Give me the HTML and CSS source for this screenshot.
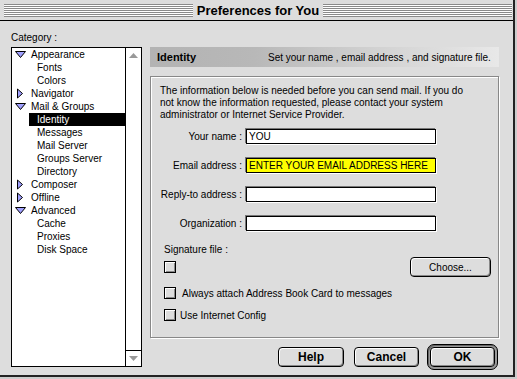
FILE: index.html
```html
<!DOCTYPE html>
<html lang="en">
<head>
<meta charset="UTF-8" />
<title>Preferences for You</title>
<link rel="stylesheet" href="styles.css">
</head>
<body>

<div class="window">
  <div class="titlebar">
    <span class="stripes"></span>
    <span class="title">Preferences for You</span>
    <span class="stripes"></span>
  </div>

  <div class="content">
    <div class="sidebar">
      <div class="cat-label">Category :</div>
      <div class="listbox">
        <ul class="tree">
          <li class="node"><svg class="twisty" width="11" height="7" viewBox="0 0 11 7"><path d="M0.5 0.5h10l-5 6z" fill="#a0a0ff" stroke="#000"/></svg>Appearance</li>
          <li class="leaf">Fonts</li>
          <li class="leaf">Colors</li>
          <li class="node"><svg class="twisty" width="11" height="11" viewBox="0 0 11 11"><path d="M2.5 1v9l5-4.5z" fill="#a0a0ff" stroke="#000"/></svg>Navigator</li>
          <li class="node"><svg class="twisty" width="11" height="7" viewBox="0 0 11 7"><path d="M0.5 0.5h10l-5 6z" fill="#a0a0ff" stroke="#000"/></svg>Mail &amp; Groups</li>
          <li class="leaf selected">Identity</li>
          <li class="leaf">Messages</li>
          <li class="leaf">Mail Server</li>
          <li class="leaf">Groups Server</li>
          <li class="leaf">Directory</li>
          <li class="node"><svg class="twisty" width="11" height="11" viewBox="0 0 11 11"><path d="M2.5 1v9l5-4.5z" fill="#a0a0ff" stroke="#000"/></svg>Composer</li>
          <li class="node"><svg class="twisty" width="11" height="11" viewBox="0 0 11 11"><path d="M2.5 1v9l5-4.5z" fill="#a0a0ff" stroke="#000"/></svg>Offline</li>
          <li class="node"><svg class="twisty" width="11" height="7" viewBox="0 0 11 7"><path d="M0.5 0.5h10l-5 6z" fill="#a0a0ff" stroke="#000"/></svg>Advanced</li>
          <li class="leaf">Cache</li>
          <li class="leaf">Proxies</li>
          <li class="leaf">Disk Space</li>
        </ul>
        <div class="scrollbar">
          <div class="arrow"><svg width="9" height="5" viewBox="0 0 9 5"><path d="M4.5 0L9 5H0z" fill="#999"/></svg></div>
          <div class="track"></div>
          <div class="arrow down"><svg width="9" height="5" viewBox="0 0 9 5"><path d="M0 0h9L4.5 5z" fill="#999"/></svg></div>
        </div>
      </div>
    </div>

    <div class="main">
      <div class="header">
        <span class="hdr-title">Identity</span>
        <span class="hdr-desc">Set your name , email address , and signature file.</span>
      </div>

      <div class="panel">
        <p class="intro">The information below is needed before you can send mail. If you do not know the information requested, please contact your system administrator or Internet Service Provider.</p>

        <div class="fields">
          <label>Your name :</label>
          <div class="field">YOU</div>
          <label>Email address :</label>
          <div class="field yellow">ENTER YOUR EMAIL ADDRESS HERE</div>
          <label>Reply-to address :</label>
          <div class="field"></div>
          <label>Organization :</label>
          <div class="field"></div>
        </div>

        <div class="sig">
          <div class="sig-label">Signature file :</div>
          <div class="sig-row">
            <span class="checkbox"></span>
            <button class="btn choose">Choose...</button>
          </div>
          <div class="check-row wide"><span class="checkbox"></span>Always attach Address Book Card to messages</div>
          <div class="check-row"><span class="checkbox"></span>Use Internet Config</div>
        </div>
      </div>

      <div class="buttons">
        <button class="btn bold help">Help</button>
        <button class="btn bold cancel">Cancel</button>
        <div class="default-ring"><button class="btn bold ok">OK</button></div>
      </div>
    </div>
  </div>
</div>

</body>
</html>
```

FILE: styles.css
```css
body {
  margin: 0;
  background: #cccccc;
  font-family: 'Liberation Sans', Arial, sans-serif;
  font-size: 10px;
  color: #000;
}

.window {
  width: 513px;
  height: 375px;
  background: #dddddd;
  border-right: 2px solid #222;
  border-bottom: 2px solid #222;
}

.titlebar {
  height: 20px;
  border-bottom: 1px solid #000;
  display: flex;
  align-items: center;
  padding: 0 1px 0 4px;
}

.stripes {
  flex: 1;
  height: 13px;
  background: repeating-linear-gradient(to bottom, #8a8a8a 0, #8a8a8a 1px, #ffffff 1px, #ffffff 2px);
}

.title {
  font-size: 13px;
  font-weight: bold;
  padding: 0 4px;
}

.content {
  display: flex;
  padding: 10px 0 0 11px;
}

.sidebar {
  width: 131px;
}

.cat-label {
  height: 13px;
  line-height: 13px;
  margin-bottom: 3px;
}

.listbox {
  height: 318px;
  background: #fff;
  border: 1px solid #000;
  display: flex;
}

.tree {
  flex: 1;
  list-style: none;
  margin: 0;
  padding: 0;
}

.tree li {
  height: 13px;
  line-height: 13px;
  white-space: nowrap;
}

.node {
  display: flex;
  align-items: center;
  padding-left: 3px;
}

.twisty {
  margin-right: 5px;
  flex: none;
}

.leaf {
  margin-left: 17px;
  padding-left: 8px;
}

.selected {
  background: #000;
  color: #fff;
}

.scrollbar {
  width: 15px;
  border-left: 1px solid #000;
  display: flex;
  flex-direction: column;
}

.arrow {
  height: 15px;
  display: flex;
  align-items: center;
  justify-content: center;
}

.arrow.down {
  border-top: 1px solid #000;
}

.track {
  flex: 1;
}

.main {
  width: 349px;
  margin: 16px 0 0 8px;
}

.header {
  height: 20px;
  display: flex;
  align-items: center;
  padding-left: 7px;
  background: linear-gradient(to right, #b3b3b3 0%, #b8b8b8 30%, #d2d2d2 65%, #e8e8e8 100%);
}

.hdr-title {
  width: 111px;
  font-size: 11px;
  font-weight: bold;
}

.panel {
  height: 262px;
  box-sizing: border-box;
  margin-top: 9px;
  border: 1px solid #888;
  box-shadow: inset 1px 1px 0 #fff, 1px 1px 0 #fff;
  padding: 8px 7px 0 9px;
}

.intro {
  margin: 0;
  line-height: 12px;
  width: 310px;
}

.fields {
  display: grid;
  grid-template-columns: 82px 190px;
  column-gap: 4px;
  row-gap: 14px;
  margin-top: 8px;
  align-items: center;
}

.fields label {
  text-align: right;
}

.field {
  height: 13px;
  line-height: 13px;
  border: 1px solid #000;
  background: #fff;
  padding-left: 2px;
  box-shadow: -1px -1px 0 #777, 1px 1px 0 #fff;
}

.field.yellow {
  background: #ffff00;
}

.sig {
  margin: 12px 0 0 4px;
}

.sig-label {
  height: 13px;
  line-height: 13px;
}

.sig-row {
  display: flex;
  align-items: center;
  justify-content: space-between;
  margin-top: 1px;
  height: 20px;
}

.checkbox {
  width: 10px;
  height: 10px;
  border: 1px solid #000;
  background: #dddddd;
  box-shadow: inset 1px 1px 0 #fff, inset -1px -1px 0 #888;
  flex: none;
}

.check-row {
  display: flex;
  align-items: center;
  gap: 4px;
  height: 12px;
  margin-top: 10px;
}

.check-row.wide {
  gap: 6px;
}

.btn {
  font-family: inherit;
  font-size: 10px;
  height: 20px;
  padding: 0;
  border: 1px solid #000;
  border-radius: 4px;
  background: #dddddd;
  box-shadow: inset 1px 1px 0 #fff, inset -1px -1px 0 #888;
  color: #000;
}

.btn.bold {
  font-size: 12px;
  font-weight: bold;
}

.choose {
  width: 81px;
}

.buttons {
  display: flex;
  justify-content: flex-end;
  align-items: center;
  margin-top: 6px;
  padding-right: 1px;
}

.help {
  width: 66px;
  margin-right: 10px;
}

.cancel {
  width: 65px;
  margin-right: 8px;
}

.default-ring {
  border: 1px solid #000;
  border-radius: 7px;
  padding: 2px;
  background: #999;
  box-shadow: inset 1px 1px 0 #666;
  display: flex;
}

.ok {
  width: 65px;
}
```
